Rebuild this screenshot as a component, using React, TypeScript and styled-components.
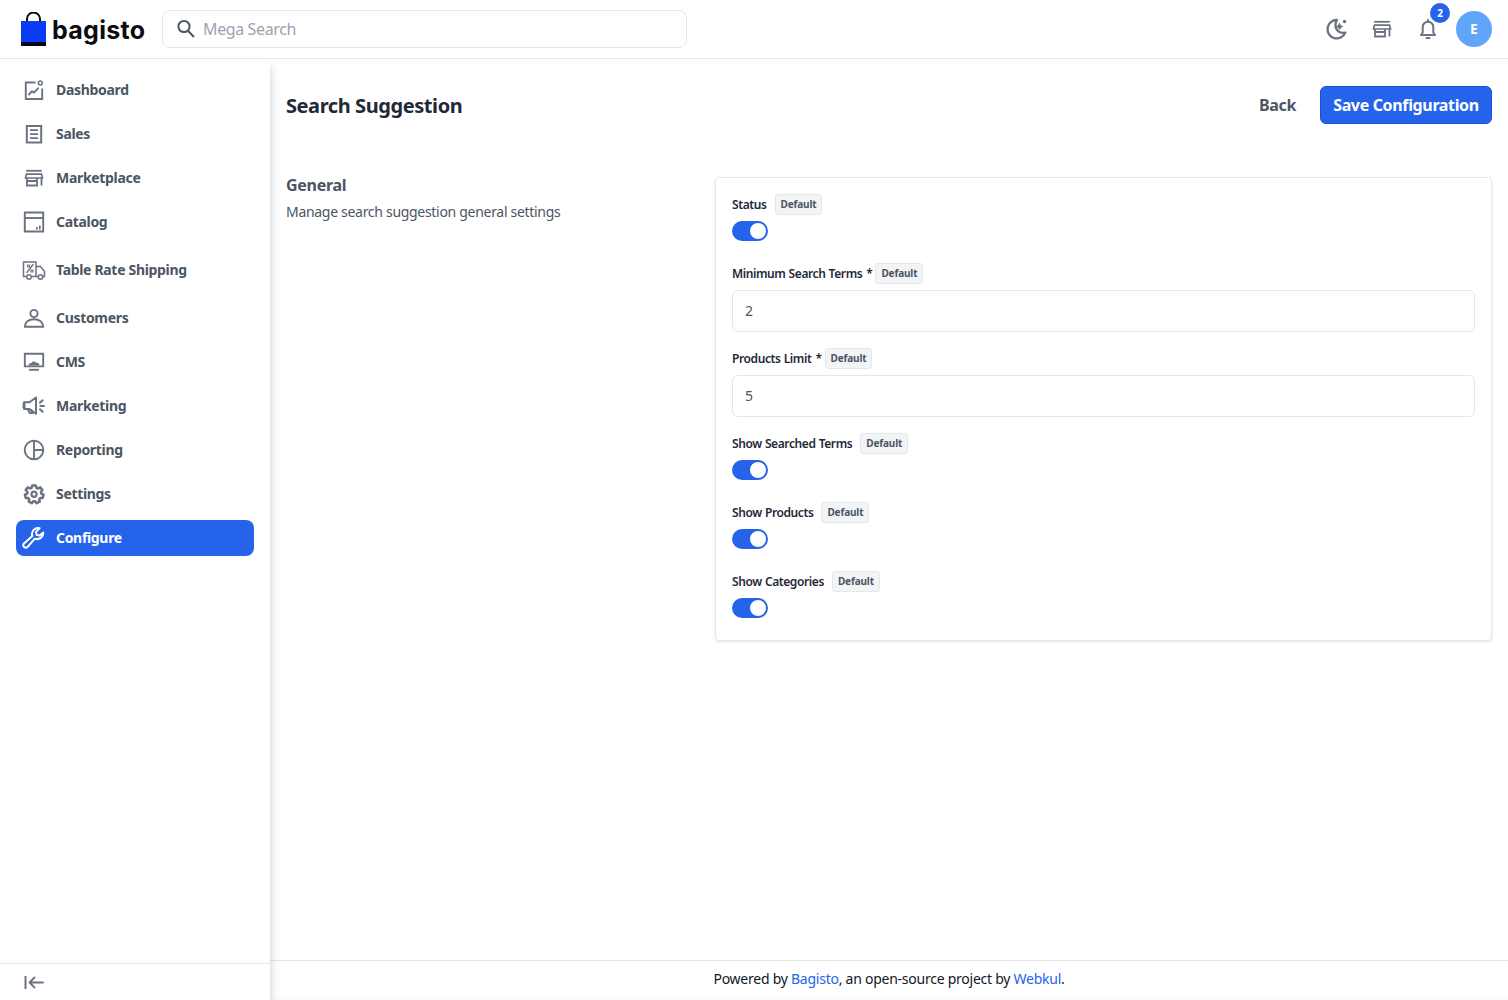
import React from 'react';
import styled, { createGlobalStyle } from 'styled-components';

const FONT = `"Noto Sans", "Open Sans", sans-serif`;

const Global = createGlobalStyle`
  html, body { margin: 0; padding: 0; background: #fff; }
  * { box-sizing: border-box; }
  body { font-family: ${FONT}; color: #1f2937; }
`;

const Page = styled.div`
  height: 1000px;
  display: flex;
  flex-direction: column;
  overflow: hidden;
`;

const Header = styled.header`
  height: 59px;
  flex: none;
  display: flex;
  align-items: center;
  justify-content: space-between;
  padding: 0 16px 1px 21px;
  border-bottom: 1px solid #e5e7eb;
  background: #fff;
`;

const HeaderLeft = styled.div`
  display: flex;
  align-items: center;
`;

const Logo = styled.div`
  width: 141px;
  display: flex;
  align-items: center;
  gap: 6px;
`;

const LogoText = styled.span`
  font-family: "Inter", sans-serif;
  font-size: 25px;
  font-weight: 700;
  letter-spacing: 0.3px;
  color: #0b0b12;
  line-height: 1;
  margin-top: 4px;
`;

const SearchBox = styled.div`
  width: 525px;
  height: 38px;
  border: 1px solid #e5e7eb;
  border-radius: 8px;
  display: flex;
  align-items: center;
  gap: 5px;
  padding-left: 11px;
`;

const SearchPlaceholder = styled.span`
  font-size: 16px;
  letter-spacing: -0.38px;
  color: #9ca3af;
`;

const HeaderRight = styled.div`
  display: flex;
  align-items: center;
  gap: 18px;
`;

const TopIcon = styled.span`
  position: relative;
  width: 28px;
  height: 28px;
  display: flex;
  align-items: center;
  justify-content: center;
  color: #6b7280;
`;

const Badge = styled.span`
  position: absolute;
  top: -12px;
  left: 16px;
  width: 20px;
  height: 20px;
  border-radius: 50%;
  background: #2563eb;
  color: #fff;
  font-size: 10px;
  font-weight: 700;
  display: flex;
  align-items: center;
  justify-content: center;
`;

const Avatar = styled.span`
  width: 36px;
  height: 36px;
  margin-left: -4px;
  border-radius: 50%;
  background: #60a5fa;
  color: #fff;
  font-size: 14px;
  font-weight: 700;
  display: flex;
  align-items: center;
  justify-content: center;
`;

const Body = styled.div`
  flex: 1;
  min-height: 0;
  display: flex;
`;

const Sidebar = styled.aside`
  width: 270px;
  flex: none;
  display: flex;
  flex-direction: column;
  background: #fff;
  box-shadow: 0 8px 10px rgba(0, 0, 0, 0.2);
  position: relative;
`;

const Nav = styled.nav`
  flex: 1;
  display: flex;
  flex-direction: column;
  gap: 8px;
  padding: 13px 16px 0;
`;

const NavItem = styled.a<{ $active?: boolean; $tall?: boolean }>`
  height: ${p => (p.$tall ? 40 : 36)}px;
  margin: ${p => (p.$tall ? '2px 0' : '0')};
  width: 238px;
  display: flex;
  align-items: center;
  gap: 10px;
  padding: 0 6px;
  border-radius: 8px;
  background: ${p => (p.$active ? '#2563eb' : 'transparent')};
  color: ${p => (p.$active ? '#fff' : '#4b5563')};
  font-size: 14px;
  font-weight: 700;
  letter-spacing: -0.32px;
  svg { color: ${p => (p.$active ? '#fff' : '#6b7280')}; flex: none; }
`;

const NavLabel = styled.span`
  margin-top: -2px;
`;

const Collapse = styled.div`
  height: 37px;
  flex: none;
  border-top: 1px solid #e5e7eb;
  display: flex;
  align-items: center;
  padding-left: 22px;
  color: #6b7280;
`;

const Main = styled.main`
  flex: 1;
  min-width: 0;
  display: flex;
  flex-direction: column;
  background: #f9fafb;
`;

const Content = styled.div`
  flex: 1;
  padding: 27px 16px 0;
  background: #fff;
`;

const TitleRow = styled.div`
  height: 38px;
  display: flex;
  align-items: center;
  justify-content: space-between;
`;

const Title = styled.h1`
  margin: 0;
  font-size: 20px;
  font-weight: 700;
  letter-spacing: -0.42px;
  color: #1f2937;
`;

const Actions = styled.div`
  display: flex;
  align-items: center;
  gap: 24px;
`;

const BackLink = styled.a`
  font-size: 16px;
  font-weight: 700;
  letter-spacing: -0.35px;
  color: #4b5563;
`;

const SaveButton = styled.button`
  height: 38px;
  width: 172px;
  border: 1px solid #1d4ed8;
  border-radius: 6px;
  background: #2563eb;
  color: #fff;
  font-family: inherit;
  font-size: 16px;
  font-weight: 700;
  letter-spacing: -0.35px;
  padding: 0;
`;

const Columns = styled.div`
  margin-top: 53px;
  display: flex;
  gap: 16px;
  align-items: flex-start;
`;

const Intro = styled.div`
  width: 413px;
  flex: none;
`;

const IntroTitle = styled.p`
  margin: 0 0 4px;
  font-size: 16px;
  line-height: 17px;
  font-weight: 700;
  letter-spacing: -0.3px;
  color: #4b5563;
`;

const IntroText = styled.p`
  margin: 8px 0 0;
  font-size: 14px;
  line-height: 20px;
  letter-spacing: -0.3px;
  color: #4b5563;
`;

const Card = styled.section`
  flex: 1;
  border: 1px solid #e5e7eb;
  border-radius: 4px;
  padding: 16px 16px 0;
  box-shadow: 0 1px 3px rgba(0, 0, 0, 0.1);
  background: #fff;
`;

const Field = styled.div<{ $gap: number }>`
  margin-bottom: ${p => p.$gap}px;
`;

const LabelRow = styled.div`
  height: 21px;
  margin-bottom: 6px;
  display: flex;
  align-items: center;
`;

const Label = styled.label`
  font-size: 12px;
  font-weight: 600;
  letter-spacing: -0.4px;
  word-spacing: 0.4px;
  color: #1f2937;
`;

const Required = styled.span`
  margin-left: 4px;
`;

const DefaultTag = styled.span<{ $tight?: boolean }>`
  height: 21px;
  margin-left: ${p => (p.$tight ? 3 : 8)}px;
  padding: 0 5px 2px;
  display: inline-flex;
  align-items: center;
  border: 1px solid #e5e7eb;
  border-radius: 3px;
  background: #f3f4f6;
  color: #4b5563;
  font-size: 10px;
  font-weight: 700;
  letter-spacing: -0.15px;
`;

const Toggle = styled.span`
  display: block;
  width: 36px;
  height: 20px;
  border-radius: 10px;
  background: #2563eb;
  position: relative;
  &::after {
    content: '';
    position: absolute;
    top: 2px;
    right: 2px;
    width: 16px;
    height: 16px;
    border-radius: 50%;
    background: #fff;
  }
`;

const TextInput = styled.div`
  height: 42px;
  border: 1px solid #e5e7eb;
  border-radius: 6px;
  padding: 0 12px 2px;
  display: flex;
  align-items: center;
  font-size: 14px;
  color: #4b5563;
`;

const Footer = styled.footer`
  height: 37px;
  margin-bottom: 3px;
  flex: none;
  border-top: 1px solid #e5e7eb;
  display: flex;
  align-items: center;
  justify-content: center;
  padding-bottom: 2px;
  font-size: 14px;
  letter-spacing: -0.25px;
  color: #111827;
  background: #fff;
  a { color: #2563eb; }
`;

type IconProps = { children: React.ReactNode; size?: number };
const Icon = ({ children, size = 24 }: IconProps) => (
  <svg width={size} height={size} viewBox="0 0 24 24" fill="none" stroke="currentColor" strokeWidth="1.9" strokeLinecap="round" strokeLinejoin="round">
    {children}
  </svg>
);

const icons: Record<string, React.ReactNode> = {
  dashboard: (
    <>
      <path d="M13.500 4.500H3.800V21h16.400V10.500" strokeLinecap="butt" strokeLinejoin="miter" />
      <circle cx="18.300" cy="5" r="1.900" strokeWidth="1.500" />
      <path d="M7 16.500l3-3.300 2 1.400 4-4.300" />
    </>
  ),
  sales: (
    <>
      <path d="M4.800 4h14.400v16.400H4.800z" strokeLinejoin="miter" strokeWidth="2" />
      <path d="M8 8.200h8M8 12.200h8M8 16.200h8" strokeLinecap="butt" strokeWidth="1.700" />
    </>
  ),
  store: (
    <>
      <path d="M4.200 4.800h15.600" strokeWidth="1.800" strokeLinecap="butt" />
      <path d="M3.500 12l1-3.800h15l1 3.800z" strokeWidth="1.700" strokeLinejoin="miter" />
      <path d="M5 12v7.500h10V12M15 15H5M19.500 12v7.500" strokeWidth="1.800" strokeLinejoin="miter" strokeLinecap="butt" />
    </>
  ),
  catalog: (
    <>
      <path d="M2.800 2.500h18.400v19H2.800z" strokeLinejoin="miter" />
      <path d="M3 8h18" strokeLinecap="butt" />
      <path d="M14.800 19.500v-2.600M17.800 19.500v-4" strokeLinecap="butt" strokeWidth="1.700" />
    </>
  ),
  shipping: (
    <>
      <path d="M4.500 18.500H1.500V4h12.500v14.500H9.500" strokeLinecap="butt" strokeLinejoin="miter" strokeWidth="1.500" />
      <path d="M14 8.500h4.500l4 5v5h-1.800M16 18.500h-2" strokeLinecap="butt" strokeLinejoin="miter" strokeWidth="1.500" />
      <circle cx="7" cy="19" r="2.200" strokeWidth="1.500" />
      <circle cx="18.500" cy="19" r="2.200" strokeWidth="1.500" />
      <path d="M5 14.500l6-8" strokeWidth="1.400" />
      <path d="M5.500 7h2v2h-2zM9 12h2v2H9z" strokeWidth="1.100" />
    </>
  ),
  customers: (
    <>
      <circle cx="12" cy="7.500" r="3.600" />
      <path d="M2.800 20.800h18.400c0-4.400-3.800-7.600-9.200-7.600s-9.200 3.200-9.200 7.600z" strokeLinejoin="miter" />
    </>
  ),
  cms: (
    <>
      <path d="M2.800 3.800h18.400V16.400H2.800z" strokeLinejoin="miter" />
      <path d="M7 19.800h10" strokeLinecap="butt" />
      <path d="M6.500 15.500c.2-2.200 1.700-2.900 3-2.500.5-1.700 3.700-2 4.700-.2 1.500-.5 3.300.5 3.300 2.700z" fill="currentColor" stroke="none" />
    </>
  ),
  marketing: (
    <>
      <path d="M14 3.500L7.500 8.300H2v6.700h5.500l6.500 4.800z" strokeWidth="2" fill="none" />
      <path d="M2 9.500v4.500" strokeWidth="3" strokeLinecap="butt" />
      <path d="M6 15.500l1.800 3.500h3l-1.300-2.500" strokeWidth="2" />
      <path d="M18 8.800l2.600-2.600M18.400 12H22M18 15.200l2.600 2.600" strokeWidth="2" />
    </>
  ),
  reporting: (
    <>
      <circle cx="12" cy="12" r="9.300" />
      <path d="M12 2.700v18.600M12 12h9.300" strokeLinecap="butt" />
    </>
  ),
  settings: (
    <g transform="translate(1 0.700) scale(0.92)">
      <path
        d="M10 3h4l.6 2.600 1.700.8 2.400-1.300 2.400 2.900-1.600 2.100.4 1.900 2.400 1.100-.9 3.600-2.600-.1-1.200 1.500.6 2.600-3.400 1.600-1.600-2.100h-2l-1.600 2.100-3.400-1.600.6-2.600-1.200-1.500-2.600.1-.9-3.600 2.400-1.100.4-1.900L2.900 7.900l2.400-2.900 2.400 1.300 1.700-.8z"
        strokeWidth="2.700"
        strokeLinejoin="round"
      />
      <circle cx="12" cy="12.500" r="2.800" strokeWidth="2.400" />
    </g>
  ),
  configure: (
    <path
      d="M21.200 6.600a6 6 0 0 1-8.300 6L5.600 20.800a2.400 2.400 0 0 1-3.600-3.300l8.300-7.600a6 6 0 0 1 7.300-7.600l-3.600 3.600.6 3 3 .6z"
      strokeWidth="2"
    />
  ),
};

const navItems = [
  { key: 'dashboard', label: 'Dashboard' },
  { key: 'sales', label: 'Sales' },
  { key: 'store', label: 'Marketplace' },
  { key: 'catalog', label: 'Catalog' },
  { key: 'shipping', label: 'Table Rate Shipping', tall: true },
  { key: 'customers', label: 'Customers' },
  { key: 'cms', label: 'CMS' },
  { key: 'marketing', label: 'Marketing' },
  { key: 'reporting', label: 'Reporting' },
  { key: 'settings', label: 'Settings' },
  { key: 'configure', label: 'Configure', active: true },
];

type FieldDef = { label: string; kind: 'toggle' | 'input'; value?: string; required?: boolean };
const fields: FieldDef[] = [
  { label: 'Status', kind: 'toggle' },
  { label: 'Minimum Search Terms', kind: 'input', value: '2', required: true },
  { label: 'Products Limit', kind: 'input', value: '5', required: true },
  { label: 'Show Searched Terms', kind: 'toggle' },
  { label: 'Show Products', kind: 'toggle' },
  { label: 'Show Categories', kind: 'toggle' },
];

export default function App() {
  return (
    <Page>
      <Global />
      <Header>
        <HeaderLeft>
          <Logo>
            <svg width="25" height="34" viewBox="0 0 25 34">
              <path d="M6 11V7a6.500 6.500 0 0 1 13 0v4" fill="none" stroke="#0b0b12" strokeWidth="2" />
              <rect x="0" y="9" width="25" height="21" fill="#0a3cf5" />
              <rect x="0" y="30" width="25" height="4" fill="#04041c" />
            </svg>
            <LogoText>bagisto</LogoText>
          </Logo>
          <SearchBox>
            <svg width="24" height="24" viewBox="0 0 24 24" fill="none" stroke="#4b5563" strokeWidth="2">
              <circle cx="10" cy="9.500" r="5.600" />
              <path d="M14 13.800l6 6.200" />
            </svg>
            <SearchPlaceholder>Mega Search</SearchPlaceholder>
          </SearchBox>
        </HeaderLeft>
        <HeaderRight>
          <TopIcon>
            <Icon>
              <path d="M13 3a9.200 9.200 0 1 0 8.300 12.500c-5.500 1.400-10.500-2.600-9.800-8.300.2-1.500.6-3 1.500-4.200z" strokeWidth="2.300" />
              <path d="M15.500 6.500l1 2 2 1-2 1-1 2-1-2-2-1 2-1z" fill="currentColor" strokeWidth="1" />
              <circle cx="20.500" cy="4.500" r=".8" fill="currentColor" />
            </Icon>
          </TopIcon>
          <TopIcon>
            <Icon>{icons.store}</Icon>
          </TopIcon>
          <TopIcon>
            <Icon>
              <path d="M5 18h14l-1.700-2.500V10a5.300 5.300 0 0 0-10.600 0v5.500z" strokeWidth="2" />
              <path d="M12 3v1.500M10.500 21h3" strokeWidth="2" />
            </Icon>
            <Badge>2</Badge>
          </TopIcon>
          <Avatar>E</Avatar>
        </HeaderRight>
      </Header>
      <Body>
        <Sidebar>
          <Nav>
            {navItems.map(item => (
              <NavItem key={item.key} $active={item.active} $tall={item.tall}>
                <Icon>{icons[item.key]}</Icon>
                <NavLabel>{item.label}</NavLabel>
              </NavItem>
            ))}
          </Nav>
          <Collapse>
            <Icon>
              <path d="M3.500 6v13" strokeWidth="2" strokeLinecap="butt" />
              <path d="M21 12.500H8M12.500 7.500l-5 5 5 5" strokeWidth="1.800" />
            </Icon>
          </Collapse>
        </Sidebar>
        <Main>
          <Content>
            <TitleRow>
              <Title>Search Suggestion</Title>
              <Actions>
                <BackLink>Back</BackLink>
                <SaveButton>Save Configuration</SaveButton>
              </Actions>
            </TitleRow>
            <Columns>
              <Intro>
                <IntroTitle>General</IntroTitle>
                <IntroText>Manage search suggestion general settings</IntroText>
              </Intro>
              <Card>
                {fields.map(f => (
                  <Field key={f.label} $gap={f.kind === 'toggle' ? 22 : 16}>
                    <LabelRow>
                      <Label>
                        {f.label}
                        {f.required ? <Required>*</Required> : null}
                      </Label>
                      <DefaultTag $tight={f.required}>Default</DefaultTag>
                    </LabelRow>
                    {f.kind === 'toggle' ? <Toggle /> : <TextInput>{f.value}</TextInput>}
                  </Field>
                ))}
              </Card>
            </Columns>
          </Content>
          <Footer>
            <span>
              Powered by <a>Bagisto</a>, an open-source project by <a>Webkul</a>.
            </span>
          </Footer>
        </Main>
      </Body>
    </Page>
  );
}
